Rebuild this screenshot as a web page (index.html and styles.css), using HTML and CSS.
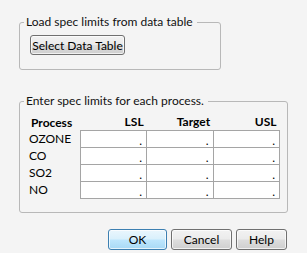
FILE: index.html
```html
<!DOCTYPE html>
<html lang="en">
<head>
    <meta charset="UTF-8">
    <title>Spec Limits</title>
    <link rel="stylesheet" href="styles.css">
</head>
<body>
    <div class="dialogo">
        <fieldset class="grupo grupo-load">
            <legend>Load spec limits from data table</legend>
            <button class="btn btn-select">Select Data Table</button>
        </fieldset>

        <fieldset class="grupo grupo-spec">
            <legend>Enter spec limits for each process.</legend>
            <table class="limites">
                <thead>
                    <tr>
                        <th class="col-process">Process</th>
                        <th>LSL</th>
                        <th>Target</th>
                        <th>USL</th>
                    </tr>
                </thead>
                <tbody>
                    <tr><td class="col-process">OZONE</td><td class="campo">.</td><td class="campo">.</td><td class="campo">.</td></tr>
                    <tr><td class="col-process">CO</td><td class="campo">.</td><td class="campo">.</td><td class="campo">.</td></tr>
                    <tr><td class="col-process">SO2</td><td class="campo">.</td><td class="campo">.</td><td class="campo">.</td></tr>
                    <tr><td class="col-process">NO</td><td class="campo">.</td><td class="campo">.</td><td class="campo">.</td></tr>
                </tbody>
            </table>
        </fieldset>

        <div class="botoes">
            <button class="btn btn-ok">OK</button>
            <button class="btn btn-cancel">Cancel</button>
            <button class="btn btn-help">Help</button>
        </div>
    </div>
</body>
</html>
```

FILE: styles.css
```css
body {
    margin: 0;
    background: #f4f4f4;
    color: #000;
    font-family: 'Lato', 'Noto Sans', sans-serif;
    font-size: 12px;
}

.dialogo {
    padding: 14px 20px 0 19px;
}

.grupo {
    margin: 0;
    border: 1px solid #b8b8b8;
    border-radius: 3px;
    background: transparent;
}

.grupo legend {
    padding: 0 4px 0 2px;
    margin-left: 0;
    line-height: 16px;
    color: #111;
}

.grupo-load {
    width: 202px;
    box-sizing: border-box;
    padding: 5px 6px 14px 4px;
}

.grupo-spec {
    margin-top: 23px;
    width: 269px;
    box-sizing: border-box;
    padding: 4px 7px 13px 4px;
}

.btn {
    font-family: inherit;
    font-size: 12px;
    color: #000;
    border: 1px solid #707070;
    border-radius: 3px;
    background: linear-gradient(#f2f2f2 0%, #ebebeb 48%, #dddddd 52%, #cfcfcf 100%);
    box-shadow: inset 0 0 0 1px rgba(255, 255, 255, 0.7);
    height: 20px;
    padding: 0;
}

.btn-select {
    width: 95px;
    margin-left: 6px;
}

.limites {
    border-collapse: collapse;
    margin-left: 2px;
}

.limites th {
    font-weight: bold;
    text-align: right;
    padding: 0 3px 1px 0;
    height: 16px;
    line-height: 14px;
    vertical-align: bottom;
}

.limites th.col-process {
    text-align: left;
    padding-left: 5px;
}

.limites td.col-process {
    width: 51px;
    padding: 0 0 0 3px;
    height: 16px;
    line-height: 16px;
}

.limites th:not(.col-process) {
    width: 62px;
}

.campo {
    width: 62px;
    height: 16px;
    padding: 0 4px 0 0;
    background: #fff;
    border: 1px solid #a5a5a5;
    text-align: right;
    vertical-align: bottom;
    line-height: 12px;
}

.botoes {
    display: flex;
    justify-content: flex-end;
    gap: 4px;
    margin-top: 16px;
    width: 268px;
}

.btn-ok {
    width: 59px;
    height: 21px;
    border-color: #3c7fb1;
    background: linear-gradient(#eaf6fd 0%, #d9f0fc 48%, #bee6fd 52%, #a7d9f5 100%);
}

.btn-cancel {
    width: 61px;
    height: 21px;
}

.btn-help {
    width: 51px;
    height: 21px;
}
```
